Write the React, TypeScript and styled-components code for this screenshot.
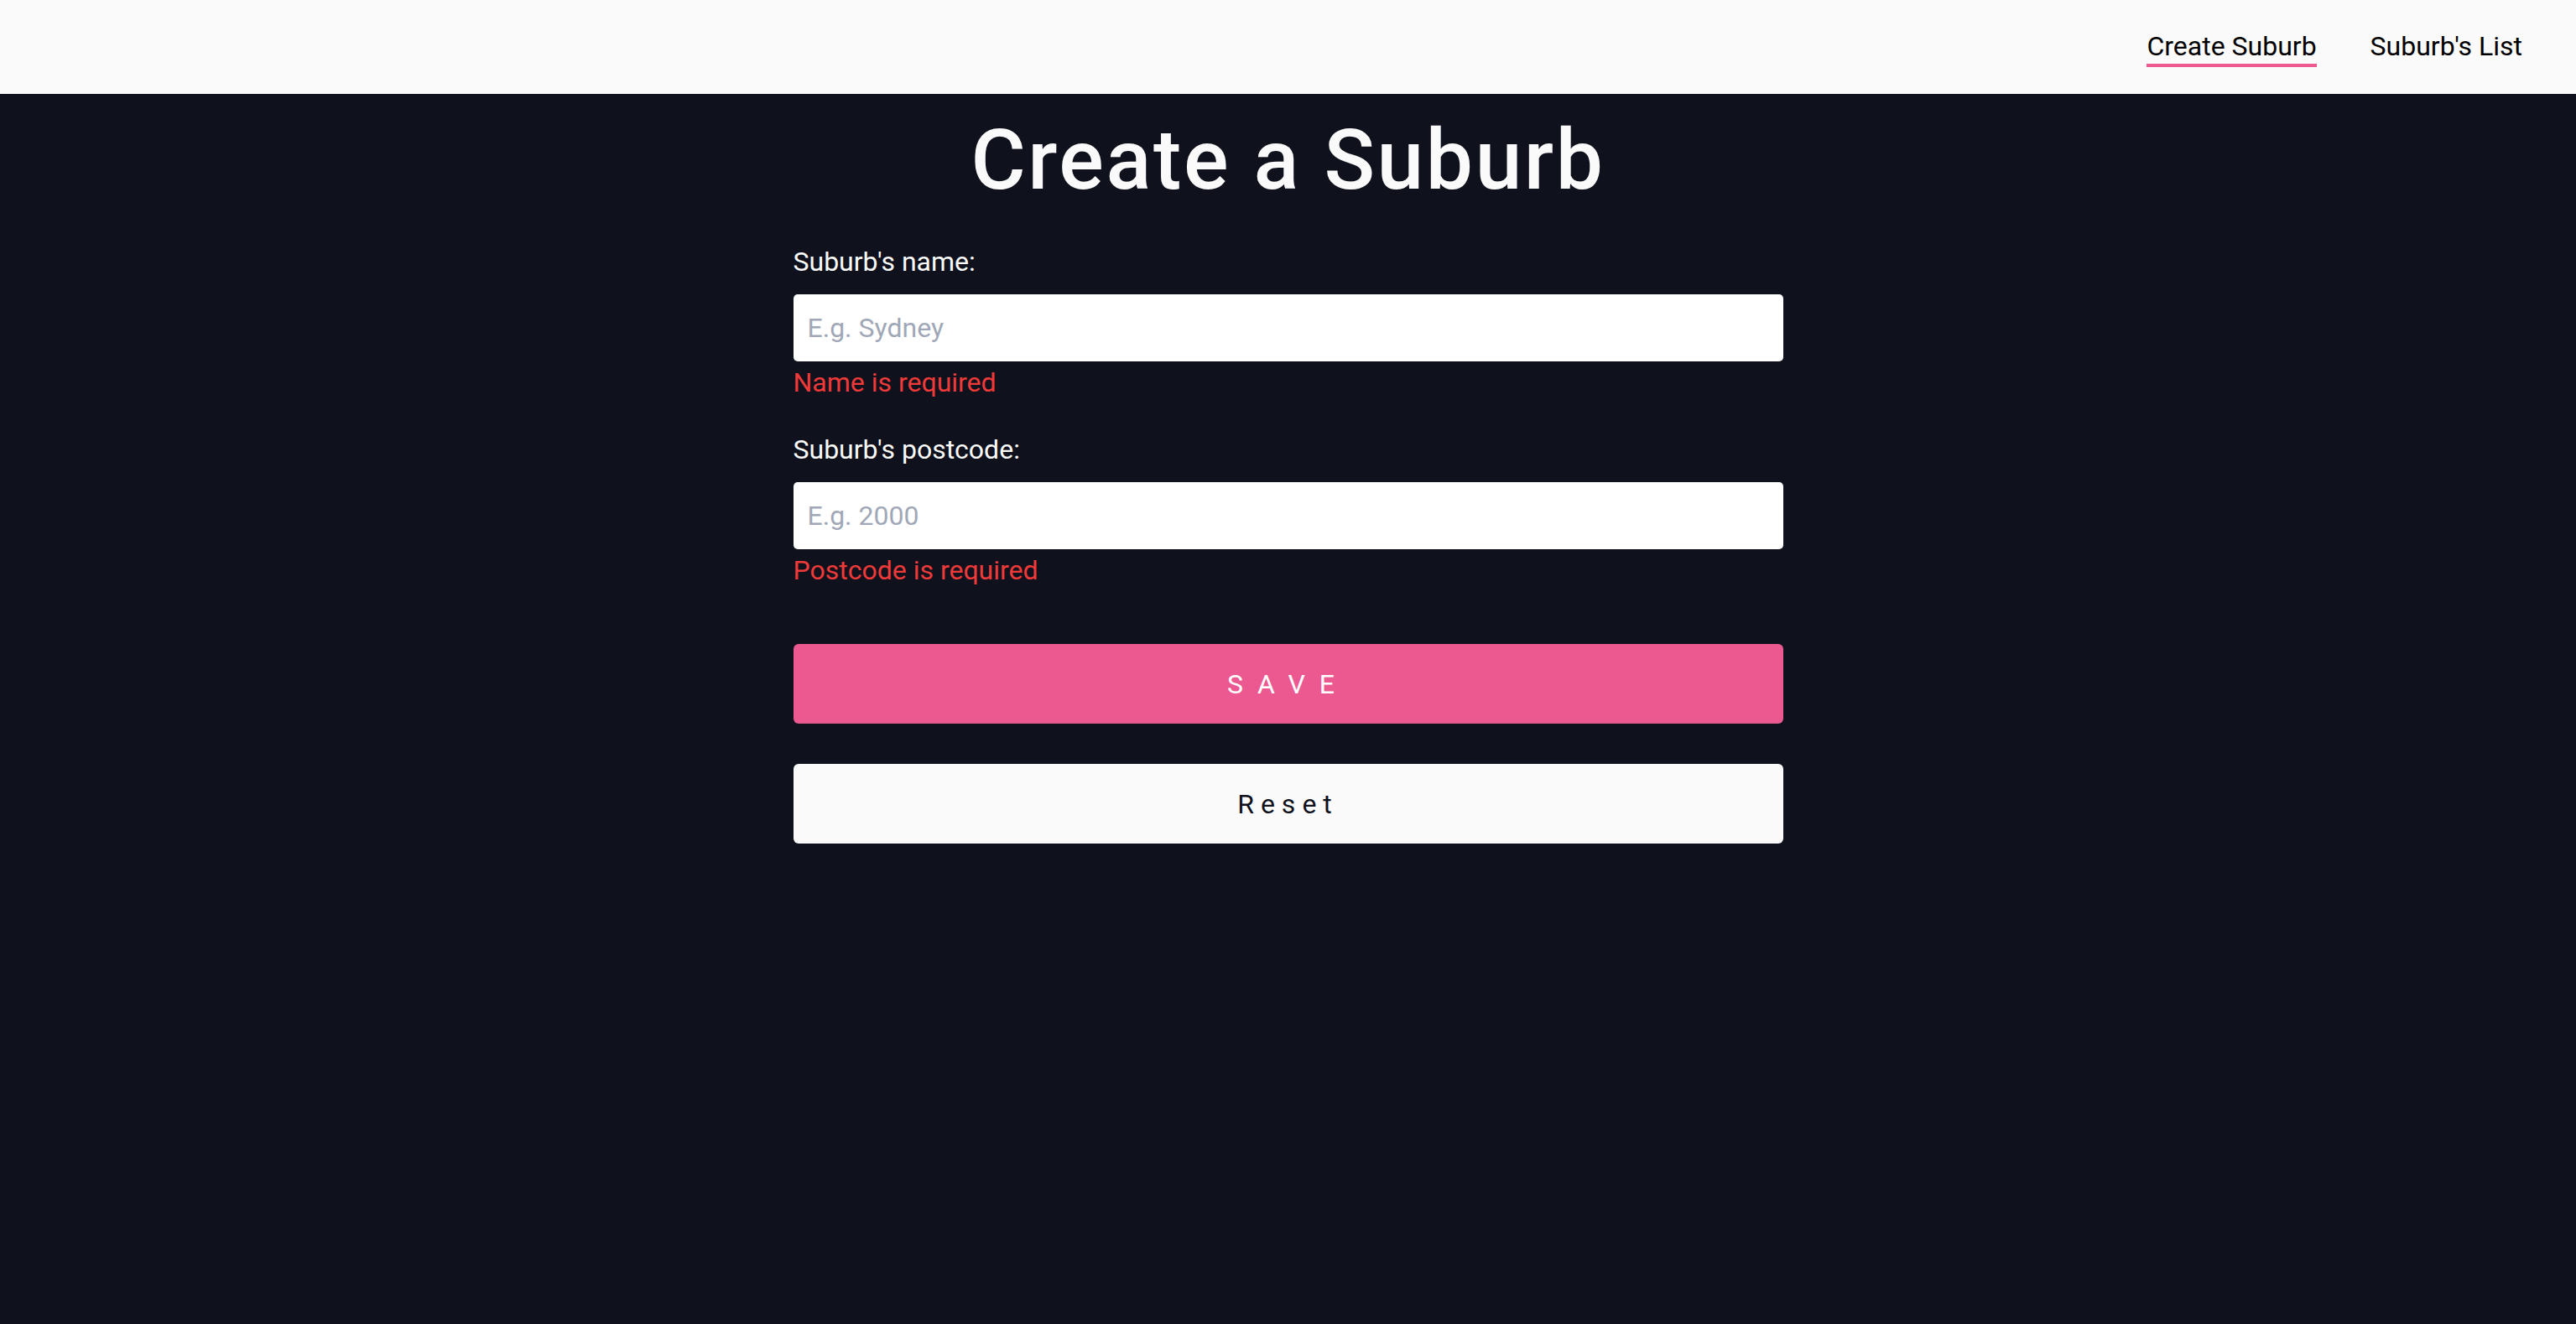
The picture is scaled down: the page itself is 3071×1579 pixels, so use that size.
import React from "react";
import styled, { createGlobalStyle } from "styled-components";

const GlobalStyle = createGlobalStyle`
  html, body {
    margin: 0;
    padding: 0;
    background: #0f111c;
    font-family: Roboto, "Noto Sans", "Liberation Sans", sans-serif;
  }
  * { box-sizing: border-box; }
`;

const Page = styled.div`
  min-height: 1579px;
  background: #0f111c;
  display: flex;
  flex-direction: column;
`;

const Header = styled.header`
  height: 112px;
  background: #fafafa;
  display: flex;
  justify-content: flex-end;
  align-items: flex-start;
  gap: 64px;
  padding: 36px 64px 0 0;
`;

const NavLink = styled.a<{ $active?: boolean }>`
  font-size: 32px;
  line-height: normal;
  color: #000;
  text-decoration: none;
  padding-bottom: 2px;
  border-bottom: 4px solid ${(p) => (p.$active ? "#ec5990" : "transparent")};
  cursor: pointer;
`;

const Main = styled.main`
  width: 1180px;
  margin: 0 auto;
  display: flex;
  flex-direction: column;
`;

const Title = styled.h1`
  margin: 20px 0 0;
  font-size: 100px;
  font-weight: 500;
  line-height: normal;
  letter-spacing: 2.6px;
  text-align: center;
  color: #fafafa;
`;

const Form = styled.form`
  margin-top: 44px;
  display: flex;
  flex-direction: column;
`;

const Field = styled.div<{ $first?: boolean }>`
  display: flex;
  flex-direction: column;
  margin-top: ${(p) => (p.$first ? "0" : "42px")};
`;

const Label = styled.label`
  font-size: 32px;
  line-height: normal;
  color: #fafafa;
  margin-bottom: 20px;
`;

const Input = styled.input`
  height: 80px;
  border: none;
  border-radius: 5px;
  background: #fff;
  padding: 0 17px;
  font-family: Roboto, "Noto Sans", sans-serif;
  font-size: 32px;
  color: #0f111c;
  outline: none;
  &::placeholder {
    color: #a0a8b8;
  }
`;

const ErrorText = styled.p`
  margin: 6px 0 0;
  font-size: 32px;
  line-height: normal;
  color: #ef3a3a;
`;

const Button = styled.button<{ $variant: "primary" | "secondary" }>`
  height: 95px;
  border: none;
  border-radius: 6px;
  font-family: Roboto, "Noto Sans", sans-serif;
  font-size: 32px;
  font-weight: 400;
  cursor: pointer;
  background: ${(p) => (p.$variant === "primary" ? "#ec5990" : "#fafafa")};
  color: ${(p) => (p.$variant === "primary" ? "#ffffff" : "#0f111c")};
  letter-spacing: ${(p) => (p.$variant === "primary" ? "17px" : "8px")};
  margin-top: ${(p) => (p.$variant === "primary" ? "69px" : "48px")};
`;

export default function App() {
  return (
    <>
      <GlobalStyle />
      <Page>
        <Header>
          <NavLink $active>Create Suburb</NavLink>
          <NavLink>Suburb's List</NavLink>
        </Header>
        <Main>
          <Title>Create a Suburb</Title>
          <Form onSubmit={(e) => e.preventDefault()}>
            <Field $first>
              <Label htmlFor="name">Suburb's name:</Label>
              <Input id="name" placeholder="E.g. Sydney" />
              <ErrorText>Name is required</ErrorText>
            </Field>
            <Field>
              <Label htmlFor="postcode">Suburb's postcode:</Label>
              <Input id="postcode" placeholder="E.g. 2000" />
              <ErrorText>Postcode is required</ErrorText>
            </Field>
            <Button type="submit" $variant="primary">SAVE</Button>
            <Button type="button" $variant="secondary">Reset</Button>
          </Form>
        </Main>
      </Page>
    </>
  );
}
